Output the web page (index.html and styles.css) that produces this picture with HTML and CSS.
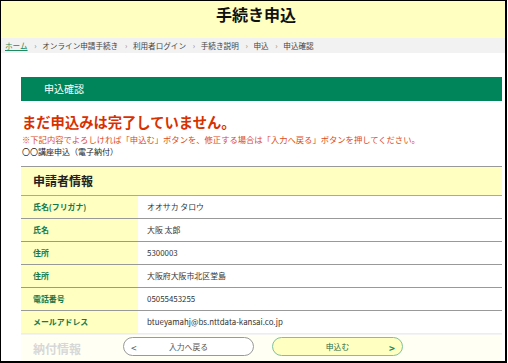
FILE: index.html
```html
<!DOCTYPE html>
<html lang="ja">
  <head>
    <meta charset="UTF-8" />
    <meta name="viewport" content="width=device-width, initial-scale=1.0" />
    <title>手続き申込</title>
    <link rel="stylesheet" href="styles.css">
  </head>
  <body>
    <div class="frame">
      <div class="page-header">
        <h1>手続き申込</h1>
      </div>
      <div class="breadcrumb">
        <a href="#">ホーム</a>
        <span class="sep">›</span>
        <span>オンライン申請手続き</span>
        <span class="sep">›</span>
        <span>利用者ログイン</span>
        <span class="sep">›</span>
        <span>手続き説明</span>
        <span class="sep">›</span>
        <span>申込</span>
        <span class="sep">›</span>
        <span>申込確認</span>
      </div>

      <div class="content">
        <h2 class="section-bar">申込確認</h2>
        <p class="warning">まだ申込みは完了していません。</p>
        <p class="note">※下記内容でよろしければ「申込む」ボタンを、修正する場合は「入力へ戻る」ボタンを押してください。</p>
        <p class="course">〇〇講座申込（電子納付）</p>

        <div class="info-table">
          <div class="info-head">申請者情報</div>
          <div class="info-row">
            <div class="info-label">氏名(フリガナ)</div>
            <div class="info-value">オオサカ タロウ</div>
          </div>
          <div class="info-row">
            <div class="info-label">氏名</div>
            <div class="info-value">大阪 太郎</div>
          </div>
          <div class="info-row">
            <div class="info-label">住所</div>
            <div class="info-value">5300003</div>
          </div>
          <div class="info-row">
            <div class="info-label">住所</div>
            <div class="info-value">大阪府大阪市北区堂島</div>
          </div>
          <div class="info-row">
            <div class="info-label">電話番号</div>
            <div class="info-value">05055453255</div>
          </div>
          <div class="info-row">
            <div class="info-label">メールアドレス</div>
            <div class="info-value">btueyamahj@bs.nttdata-kansai.co.jp</div>
          </div>
        </div>

        <div class="info-table next">
          <div class="info-head">納付情報</div>
        </div>
      </div>

      <div class="action-bar">
        <button class="btn btn-back"><span class="arrow">&lt;</span>入力へ戻る</button>
        <button class="btn btn-submit">申込む<span class="arrow">&gt;</span></button>
      </div>
    </div>
  </body>
</html>
```

FILE: styles.css
```css
* {
  box-sizing: border-box;
}

body {
  margin: 0;
  background: #fff;
  font-family: "Noto Sans CJK JP", "Noto Sans", sans-serif;
  color: #222;
}

.frame {
  position: relative;
  width: 507px;
  height: 363px;
  border-top: 1px solid #000;
  border-left: 1px solid #000;
  border-right: 2px solid #000;
  border-bottom: 2px solid #000;
  overflow: hidden;
}

.page-header {
  background: #ffffc2;
  height: 37px;
  padding-top: 2px;
  padding-left: 6px;
  text-align: center;
}

.page-header h1 {
  margin: 0;
  font-size: 16px;
  line-height: 22px;
  font-weight: bold;
  color: #111;
}

.breadcrumb {
  background: #f2f2f2;
  height: 15px;
  padding-left: 4px;
  font-size: 7.6px;
  line-height: 15px;
  color: #444;
  white-space: nowrap;
}

.breadcrumb a {
  color: #1d8a63;
}

.breadcrumb .sep {
  color: #888;
  margin: 0 4px 0 5px;
}

.content {
  padding: 24px 3px 0 20px;
}

.section-bar {
  margin: 0;
  background: #00855a;
  color: #fff;
  height: 24px;
  line-height: 24px;
  padding-left: 23px;
  font-size: 10px;
  font-weight: normal;
}

.warning {
  margin: 13px 0 0 1px;
  font-size: 14.3px;
  line-height: 16px;
  font-weight: bold;
  color: #d83100;
}

.note {
  margin: 3px 0 0 1px;
  font-size: 8.3px;
  line-height: 12px;
  color: #dc4a1c;
  white-space: nowrap;
}

.course {
  margin: 1px 0 0 1px;
  font-size: 8px;
  line-height: 12px;
  color: #222;
}

.info-table {
  margin-top: 8px;
  border-top: 1px solid #999;
}

.info-table.next {
  margin-top: 0;
  border-top: 1px solid #bbb;
}

.info-head {
  background: #ffffc2;
  height: 29px;
  line-height: 28px;
  padding-left: 12px;
  font-size: 12px;
  font-weight: bold;
  color: #222;
  border-bottom: 1px solid #a8a8a8;
}

.info-row {
  display: flex;
  height: 23px;
  border-bottom: 1px solid #999;
  font-size: 7.9px;
  line-height: 22px;
}

.info-label {
  width: 117px;
  background: #ffffc2;
  padding-left: 12px;
  font-weight: bold;
  color: #13794b;
}

.info-value {
  flex: 1;
  padding-left: 9px;
  color: #333;
}

.action-bar {
  position: absolute;
  left: 0;
  right: 0;
  bottom: 0;
  height: 28px;
  background: rgba(255, 255, 255, 0.82);
  display: flex;
  justify-content: center;
  gap: 18px;
  padding: 4px 0 0 20px;
}

.btn {
  position: relative;
  width: 131px;
  height: 19px;
  border-radius: 10px;
  font-family: "Noto Sans CJK JP", "Noto Sans", sans-serif;
  font-size: 7.8px;
  padding: 0;
  cursor: pointer;
}

.btn .arrow {
  position: absolute;
  top: 2px;
  font-size: 10px;
}

.btn-back {
  background: #fff;
  border: 1px solid #999;
  color: #555;
}

.btn-back .arrow {
  left: 7px;
  color: #555;
}

.btn-submit {
  background: #ffffc2;
  border: 1px solid #7ac49a;
  color: #1f6a46;
}

.btn-submit .arrow {
  right: 7px;
  font-weight: bold;
  color: #1a8a5a;
}
```
